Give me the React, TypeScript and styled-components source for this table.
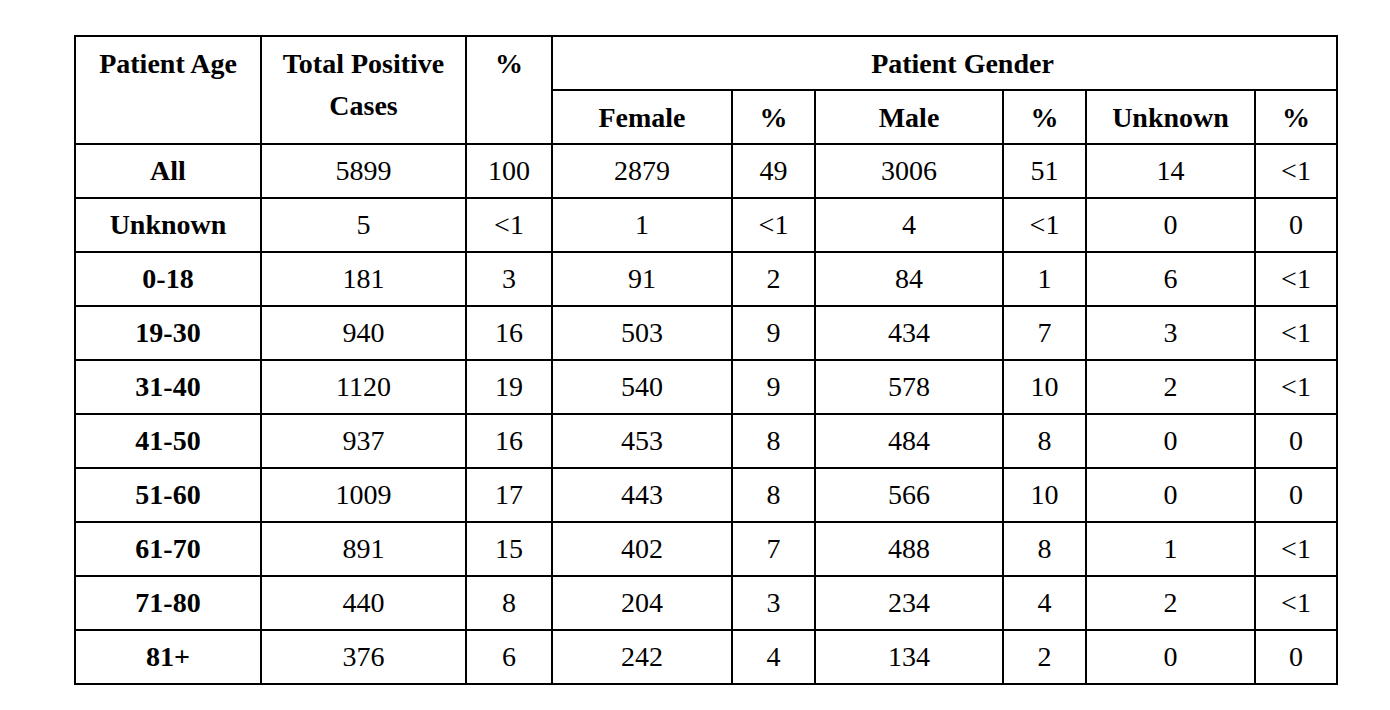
import styled, { createGlobalStyle } from "styled-components";

const GlobalStyle = createGlobalStyle`
  html, body {
    margin: 0;
    padding: 0;
    background: #ffffff;
  }
`;

const Page = styled.div`
  padding: 35px 0 0 74px;
`;

const Table = styled.table`
  border-collapse: collapse;
  table-layout: fixed;
  width: 1264px;
  font-family: "Liberation Serif", Tinos, "Times New Roman", Times, "DejaVu Serif", serif;
  font-size: 28px;
  line-height: 42px;
  color: #000;

  th,
  td {
    font-family: "Liberation Serif", Tinos, "Times New Roman", Times, "DejaVu Serif", serif;
  }
`;

const HeadCell = styled.th<{ $shift?: number }>`
  border: 2px solid #000;
  padding: 6px 10px 4px ${({ $shift }) => 10 + ($shift ?? 0)}px;
  font-weight: bold;
  text-align: center;
  vertical-align: top;
`;

const Cell = styled.td<{ $bold?: boolean }>`
  border: 2px solid #000;
  padding: 5px 10px;
  height: 42px;
  text-align: center;
  vertical-align: middle;
  font-weight: ${({ $bold }) => ($bold ? "bold" : "normal")};
`;

const widths = [186, 205, 86, 180, 83, 188, 83, 169, 82];

const rows: string[][] = [
  ["All", "5899", "100", "2879", "49", "3006", "51", "14", "<1"],
  ["Unknown", "5", "<1", "1", "<1", "4", "<1", "0", "0"],
  ["0-18", "181", "3", "91", "2", "84", "1", "6", "<1"],
  ["19-30", "940", "16", "503", "9", "434", "7", "3", "<1"],
  ["31-40", "1120", "19", "540", "9", "578", "10", "2", "<1"],
  ["41-50", "937", "16", "453", "8", "484", "8", "0", "0"],
  ["51-60", "1009", "17", "443", "8", "566", "10", "0", "0"],
  ["61-70", "891", "15", "402", "7", "488", "8", "1", "<1"],
  ["71-80", "440", "8", "204", "3", "234", "4", "2", "<1"],
  ["81+", "376", "6", "242", "4", "134", "2", "0", "0"],
];

export default function App() {
  return (
    <Page>
      <GlobalStyle />
      <Table>
        <colgroup>
          {widths.map((w, i) => (
            <col key={i} style={{ width: w }} />
          ))}
        </colgroup>
        <thead>
          <tr>
            <HeadCell rowSpan={2}>Patient Age</HeadCell>
            <HeadCell rowSpan={2}>Total Positive Cases</HeadCell>
            <HeadCell rowSpan={2}>%</HeadCell>
            <HeadCell colSpan={6} $shift={36}>
              Patient Gender
            </HeadCell>
          </tr>
          <tr>
            <HeadCell>Female</HeadCell>
            <HeadCell>%</HeadCell>
            <HeadCell>Male</HeadCell>
            <HeadCell>%</HeadCell>
            <HeadCell>Unknown</HeadCell>
            <HeadCell>%</HeadCell>
          </tr>
        </thead>
        <tbody>
          {rows.map((row) => (
            <tr key={row[0]}>
              {row.map((value, i) => (
                <Cell key={i} $bold={i === 0}>
                  {value}
                </Cell>
              ))}
            </tr>
          ))}
        </tbody>
      </Table>
    </Page>
  );
}
